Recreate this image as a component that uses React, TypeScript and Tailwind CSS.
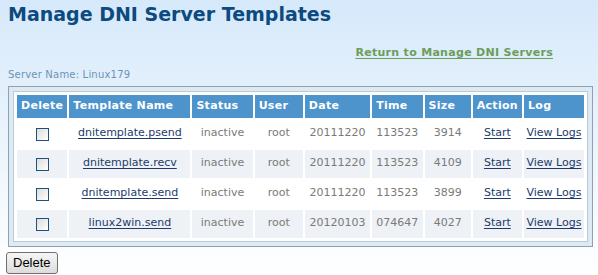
import { useState } from 'react'

type Template = {
    name: string
    status: string
    user: string
    date: string
    time: string
    size: string
}

const templates: Template[] = [
    { name: 'dnitemplate.psend', status: 'inactive', user: 'root', date: '20111220', time: '113523', size: '3914' },
    { name: 'dnitemplate.recv', status: 'inactive', user: 'root', date: '20111220', time: '113523', size: '4109' },
    { name: 'dnitemplate.send', status: 'inactive', user: 'root', date: '20111220', time: '113523', size: '3899' },
    { name: 'linux2win.send', status: 'inactive', user: 'root', date: '20120103', time: '074647', size: '4027' },
]

const headers = [
    { label: 'Delete', w: 'w-[50px]' },
    { label: 'Template Name', w: 'w-[122px]' },
    { label: 'Status', w: 'w-[61px]' },
    { label: 'User', w: 'w-[49px]' },
    { label: 'Date', w: 'w-[66px]' },
    { label: 'Time', w: 'w-[51px]' },
    { label: 'Size', w: 'w-[47px]' },
    { label: 'Action', w: 'w-[49px]' },
    { label: 'Log', w: 'w-[62px]' },
]

const linkCls = 'text-[#1d3b6b] underline underline-offset-2'

const App = () => {
    const [checked, setChecked] = useState<boolean[]>(templates.map(() => false))

    const toggle = (i: number) => {
        setChecked(prev => prev.map((c, j) => (j === i ? !c : c)))
    }

    return (
        <div className="w-[598px] h-[275px] overflow-hidden bg-gradient-to-b from-[#d6e9fa] via-[#eaf4fd] to-white font-['DejaVu_Sans',Verdana,sans-serif]">
            <h1 className="pl-[8px] pt-[1px] text-[19px] leading-[26px] font-bold text-[#0c4a7f]">
                Manage DNI Server Templates
            </h1>

            <div className="flex justify-end pr-[45px] mt-[18px]">
                <a href="#" className="text-[11px] font-bold tracking-[0.3px] text-[#6c9e5a] underline underline-offset-2">
                    Return to Manage DNI Servers
                </a>
            </div>

            <p className="pl-[8px] mt-[7px] text-[10px] leading-[12px] tracking-[0.2px] text-[#6b93b6]">Server Name: Linux179</p>

            <div className="mx-[8px] mt-[5px] w-[585px] border border-[#8ea2b4] bg-[#dde9f3] p-[4px]">
                <div className="border border-[#b9cad8] bg-white p-[1px]">
                    <table className="border-separate border-spacing-[2px] table-fixed">
                        <thead>
                            <tr>
                                {headers.map(h => (
                                    <th
                                        key={h.label}
                                        className={`${h.w} h-[23px] bg-[#4d93cc] px-[4px] text-left text-[11px] font-bold tracking-[0.3px] text-white whitespace-nowrap`}
                                    >
                                        {h.label}
                                    </th>
                                ))}
                            </tr>
                        </thead>
                        <tbody>
                            {templates.map((t, i) => (
                                <tr key={t.name} className={i % 2 === 1 ? 'bg-[#eef1f5]' : 'bg-white'}>
                                    <td className="h-[28px] text-center">
                                        <input
                                            type="checkbox"
                                            checked={checked[i]}
                                            onChange={() => toggle(i)}
                                            className="appearance-none w-[13px] h-[13px] align-middle border border-[#1c5180] bg-gradient-to-br from-[#dcdcd7] to-white"
                                        />
                                    </td>
                                    <td className="text-center text-[11px]">
                                        <a href="#" className={linkCls}>{t.name}</a>
                                    </td>
                                    <td className="text-center text-[11px] text-[#7a7a7a]">{t.status}</td>
                                    <td className="text-center text-[11px] text-[#7a7a7a]">{t.user}</td>
                                    <td className="text-center text-[11px] text-[#7a7a7a]">{t.date}</td>
                                    <td className="text-center text-[11px] text-[#7a7a7a]">{t.time}</td>
                                    <td className="text-center text-[11px] text-[#7a7a7a]">{t.size}</td>
                                    <td className="text-center text-[11px]">
                                        <a href="#" className={linkCls}>Start</a>
                                    </td>
                                    <td className="text-center text-[11px]">
                                        <a href="#" className={linkCls}>View Logs</a>
                                    </td>
                                </tr>
                            ))}
                        </tbody>
                    </table>
                </div>
            </div>

            <div className="flex pl-[6px] mt-[5px]">
                <button
                    type="button"
                    className="h-[22px] px-[6px] border border-[#707070] rounded-[3px] bg-gradient-to-b from-[#f6f6f6] to-[#dcdcdc] text-[13px] leading-[18px] text-black font-['Liberation_Sans',Arial,sans-serif]"
                >
                    Delete
                </button>
            </div>
        </div>
    )
}

export default App
